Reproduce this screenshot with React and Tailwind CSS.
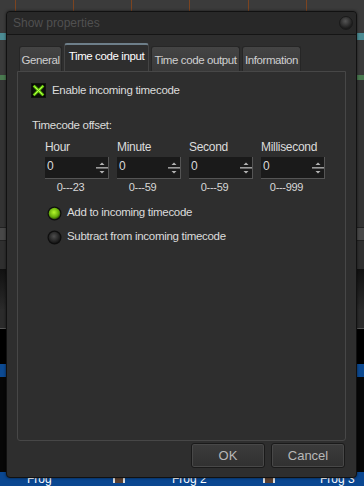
import React from 'react';

const font = { fontFamily: '"Liberation Sans", Arial, sans-serif' };

function CheckBox() {
  return (
    <svg width="15" height="15" viewBox="0 0 15 15">
      <defs>
        <radialGradient id="cbg" cx="50%" cy="50%" r="60%">
          <stop offset="0%" stopColor="#1b2a10" />
          <stop offset="100%" stopColor="#050505" />
        </radialGradient>
      </defs>
      <rect x="0.5" y="0.5" width="14" height="14" fill="url(#cbg)" stroke="#111" />
      <path d="M3.5 3.5 L11.5 11.5 M11.5 3.5 L3.5 11.5" stroke="#6fd00e" strokeWidth="2.6" strokeLinecap="square" />
      <path d="M3.5 3.5 L11.5 11.5 M11.5 3.5 L3.5 11.5" stroke="#b6ff52" strokeWidth="0.9" />
    </svg>
  );
}

function Radio({ on }) {
  const id = on ? 'rOn' : 'rOff';
  return (
    <svg width="15" height="15" viewBox="0 0 15 15">
      <defs>
        <radialGradient id={id} cx="45%" cy="40%" r="60%">
          <stop offset="0%" stopColor={on ? '#b4f82c' : '#4e4e4e'} />
          <stop offset="70%" stopColor={on ? '#64aa0a' : '#262626'} />
          <stop offset="100%" stopColor={on ? '#2c4a04' : '#141414'} />
        </radialGradient>
      </defs>
      <circle cx="7.5" cy="7.5" r="7" fill="#0e0e0e" />
      <circle cx="7.5" cy="7.5" r="5.8" fill={`url(#${id})`} />
    </svg>
  );
}

function Spin({ label, range }) {
  return (
    <div className="flex flex-col w-[64px]">
      <span className="text-[12px] leading-[14px] text-[#dcdcdc] mb-[3px]">{label}</span>
      <div className="flex h-[22px] bg-[#1a1a1a] border-r border-b border-[#555]">
        <span className="flex-1 pl-[2px] pt-[2px] text-[12px] leading-[14px] text-[#d8d8d8]">0</span>
        <div className="w-[13px] flex flex-col items-center pt-[3px]">
          <svg width="12" height="16" viewBox="0 0 12 16">
            <path d="M3.5 5 L6 2.5 L8.5 5 Z" fill="#b4b4b4" />
            <rect x="0" y="7" width="12" height="1.6" fill="#9a9a9a" />
            <path d="M3.5 11 L6 13.5 L8.5 11 Z" fill="#b4b4b4" />
          </svg>
        </div>
      </div>
      <span className="w-[51px] text-center text-[11px] leading-[12px] text-[#d8d8d8] mt-[2px]">{range}</span>
    </div>
  );
}

function Tab({ children, active, w }) {
  return active ? (
    <div className={`${w} h-[28px] pt-[3px] text-center whitespace-nowrap rounded-t-[3px] bg-[#2e2e2e] border-t-2 border-[#6e7f8a] border-x border-x-[#444] text-white text-[11.5px] leading-[16px]`}>
      {children}
    </div>
  ) : (
    <div className={`${w} h-[25px] pt-[6px] text-center whitespace-nowrap rounded-t-[3px] bg-gradient-to-b from-[#444] to-[#393939] border border-b-0 border-[#262626] text-[#cfcfcf] text-[11.5px] leading-[14px]`}>
      {children}
    </div>
  );
}

export default function App() {
  return (
    <div className="relative w-[364px] h-[486px] overflow-hidden bg-[#333]" style={font}>
      {/* background timeline behind the window */}
      <div className="flex flex-col w-full h-full">
        <div className="h-[33px] bg-[#3b3b3b] flex">
          <div className="w-[16px]" />
          {[0, 1, 2, 3, 4, 5].map((i) => (
            <div key={i} className="w-[64px] border-l border-[#7c4420]" />
          ))}
        </div>
        <div className="h-[7px] bg-[#4c8c94]" />
        <div className="h-[35px] bg-[#3a3a3a]" />
        <div className="h-[5px] bg-[#4a7a50]" />
        <div className="h-[148px] bg-[#333]" />
        <div className="h-[15px] bg-[#484848] border-y border-[#222]" />
        <div className="h-[28px] bg-[#2f2f2f]" />
        <div className="h-[40px] bg-gradient-to-b from-[#111] to-[#2a2a2a]" />
        <div className="h-[20px] bg-[#2b2b2b] border-b border-[#555]" />
        <div className="h-[35px] bg-[#000]" />
        <div className="h-[13px] bg-[#0c4a92]" />
        <div className="h-[96px] bg-[#070707]" />
        <div className="flex-1 bg-[#0a4791] flex items-start text-[12px] text-white leading-[14px]">
          <span className="ml-[27px] w-[26px]">Frog</span>
          <span className="ml-[60px] mt-[3px] w-[12px] h-[8px] bg-[#5a4030] border-x-2 border-[#ddd]" />
          <span className="ml-[47px] w-[36px]">Frog 2</span>
          <span className="ml-[55px] mt-[3px] w-[12px] h-[8px] bg-[#5a4030] border-x-2 border-[#ddd]" />
          <span className="ml-[45px]">Frog 3</span>
        </div>
      </div>

      {/* dialog window */}
      <div className="absolute left-[6px] top-[11px] w-[351px] h-[467px] flex flex-col bg-[#2e2e2e] border border-[#111] rounded-[4px] shadow-[0_0_3px_rgba(0,0,0,0.6)]">
        <div className="h-[23px] flex items-center justify-between pl-[6px] pr-[3px] bg-[#282828] border-b border-[#151515] rounded-t-[4px]">
          <span className="text-[12px] text-[#505050]">Show properties</span>
          <span className="w-[14px] h-[14px] rounded-full bg-[radial-gradient(circle_at_45%_35%,#555,#1c1c1c_70%)] border border-[#1a1a1a]" />
        </div>

        <div className="flex flex-col px-[10px] pt-[8px]">
          <div className="flex items-end gap-[2px] pl-[2px] h-[28px] tracking-[-0.4px]">
            <Tab w="w-[43px]">General</Tab>
            <Tab active w="w-[85px]">Time code input</Tab>
            <Tab w="w-[89px]">Time code output</Tab>
            <Tab w="w-[59px]">Information</Tab>
          </div>

          <div className="h-[370px] border border-[#474747] rounded-b-[3px] flex flex-col pl-[13px] pt-[9px] tracking-[-0.3px]">
            <div className="flex items-center gap-[6px]">
              <CheckBox />
              <span className="text-[11.5px] leading-[18px] text-[#dcdcdc]">Enable incoming timecode</span>
            </div>

            <span className="mt-[19px] text-[11.5px] leading-[14px] text-[#dcdcdc] pl-[1px]">Timecode offset:</span>

            <div className="flex gap-[8px] pl-[14px] mt-[8px]">
              <Spin label="Hour" range="0---23" />
              <Spin label="Minute" range="0---59" />
              <Spin label="Second" range="0---59" />
              <Spin label="Millisecond" range="0---999" />
            </div>

            <div className="flex flex-col gap-[6px] pl-[16px] mt-[11px]">
              <div className="flex items-center gap-[5px] h-[18px]">
                <Radio on />
                <span className="text-[11.5px] text-[#dcdcdc]">Add to incoming timecode</span>
              </div>
              <div className="flex items-center gap-[5px] h-[18px]">
                <Radio />
                <span className="text-[11.5px] text-[#dcdcdc]">Subtract from incoming timecode</span>
              </div>
            </div>
          </div>

          <div className="flex justify-end gap-[6px] mt-[2px] pr-[1px]">
            <button className="w-[74px] h-[25px] rounded-[3px] border border-[#1a1a1a] bg-gradient-to-b from-[#3c3c3c] to-[#303030] shadow-[inset_0_0_0_1px_#484848] text-[13px] text-[#b8b8b8]">OK</button>
            <button className="w-[74px] h-[25px] rounded-[3px] border border-[#1a1a1a] bg-gradient-to-b from-[#3c3c3c] to-[#303030] shadow-[inset_0_0_0_1px_#484848] text-[13px] text-[#b8b8b8]">Cancel</button>
          </div>
        </div>
      </div>
    </div>
  );
}
